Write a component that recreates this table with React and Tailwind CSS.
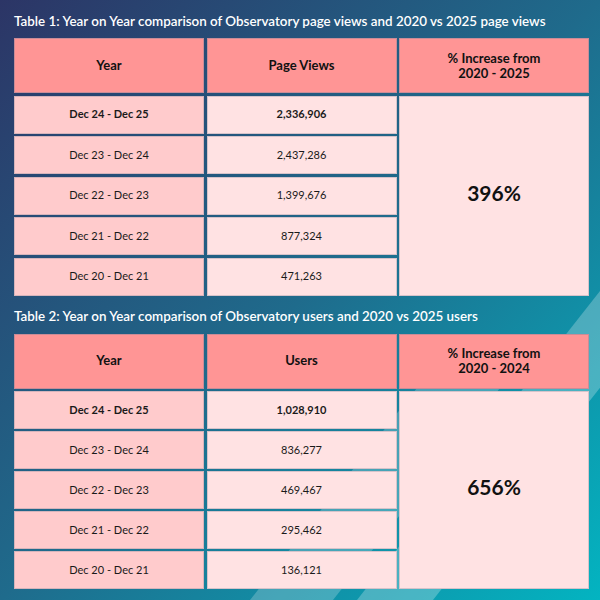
import React from "react";

const font = { fontFamily: "Lato, 'Noto Sans', sans-serif" };

function Table({ title, colTitle, pctLabel, pct, rows, rowH }) {
  return (
    <div className="flex flex-col">
      <div className="h-[38px] pt-[4px] flex items-center text-white text-[13.4px] font-semibold whitespace-nowrap">
        {title}
      </div>
      <div
        className={
          "grid grid-cols-[190px_190px_190px] gap-[2.5px] " +
          (rowH === 38
            ? "grid-rows-[55px_38px_38px_38px_38px_38px]"
            : "grid-rows-[55px_37.5px_37.5px_37.5px_37.5px_37.5px]")
        }
      >
        <div className="bg-[#ff9595] border border-[#7a7f9a]/40 flex items-center justify-center text-[13px] font-bold text-[#111]">
          Year
        </div>
        <div className="bg-[#ff9595] border border-[#7a7f9a]/40 flex items-center justify-center text-[13px] font-bold text-[#111]">
          {colTitle}
        </div>
        <div className="bg-[#ff9595] border border-[#7a7f9a]/40 flex flex-col items-center justify-center text-[13px] leading-[15px] font-bold text-[#111] text-center">
          <span>% Increase from</span>
          <span>{pctLabel}</span>
        </div>
        {rows.map((r, i) => (
          <React.Fragment key={i}>
            <div
              className={
                "col-start-1 bg-[#ffcbcc] border border-[#8a8a9a]/35 flex items-center justify-center text-[11px] text-[#1a1a1a] " +
                (i === 0 ? "font-bold" : "font-normal")
              }
              style={{ gridRowStart: i + 2 }}
            >
              {r[0]}
            </div>
            <div
              className={
                "col-start-2 bg-[#ffe2e3] border border-[#8a8a9a]/35 flex items-center justify-center text-[11px] text-[#1a1a1a] " +
                (i === 0 ? "font-bold" : "font-normal")
              }
              style={{ gridRowStart: i + 2 }}
            >
              {r[1]}
            </div>
          </React.Fragment>
        ))}
        <div className="col-start-3 row-start-2 row-span-5 bg-[#ffe2e3] border border-[#8a8a9a]/35 flex items-center justify-center pb-[6px] text-[21px] font-bold text-[#111]">
          {pct}
        </div>
      </div>
    </div>
  );
}

export default function App() {
  return (
    <div
      className="relative w-[600px] h-[600px] overflow-hidden bg-[linear-gradient(135deg,#2c3566_0%,#1f6b8c_50%,#03b4c1_100%)]"
      style={font}
    >
      <svg className="absolute inset-0" width="600" height="600" viewBox="0 0 600 600">
        <polygon points="250,600 333,600 522,360 439,360" fill="#ffffff" fillOpacity="0.22" />
        <polygon points="357,600 433,600 676,291 600,291" fill="#ffffff" fillOpacity="0.25" />
      </svg>
      <div className="relative flex flex-col pl-[14px]">
        <Table
          title="Table 1: Year on Year comparison of Observatory page views and 2020 vs 2025 page views"
          colTitle="Page Views"
          pctLabel="2020 - 2025"
          pct="396%"
          rowH={38}
          rows={[
            ["Dec 24 - Dec 25", "2,336,906"],
            ["Dec 23 - Dec 24", "2,437,286"],
            ["Dec 22 - Dec 23", "1,399,676"],
            ["Dec 21 - Dec 22", "877,324"],
            ["Dec 20 - Dec 21", "471,263"],
          ]}
        />
        <Table
          title="Table 2: Year on Year comparison of Observatory users and 2020 vs 2025 users"
          colTitle="Users"
          pctLabel="2020 - 2024"
          pct="656%"
          rowH={37.5}
          rows={[
            ["Dec 24 - Dec 25", "1,028,910"],
            ["Dec 23 - Dec 24", "836,277"],
            ["Dec 22 - Dec 23", "469,467"],
            ["Dec 21 - Dec 22", "295,462"],
            ["Dec 20 - Dec 21", "136,121"],
          ]}
        />
      </div>
    </div>
  );
}
